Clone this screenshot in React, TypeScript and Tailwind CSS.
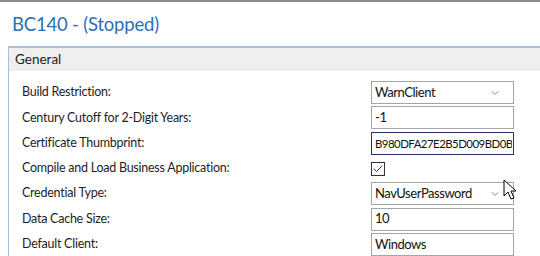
import { Check, ChevronDown } from "lucide-react";

type Field = {
  label: string;
  value?: string;
  kind: "select" | "text" | "check";
  focused?: boolean;
};

const fields: Field[] = [
  { label: "Build Restriction:", value: "WarnClient", kind: "select" },
  { label: "Century Cutoff for 2-Digit Years:", value: "-1", kind: "text" },
  { label: "Certificate Thumbprint:", value: "B980DFA27E2B5D009BD0B", kind: "text", focused: true },
  { label: "Compile and Load Business Application:", kind: "check" },
  { label: "Credential Type:", value: "NavUserPassword", kind: "select" },
  { label: "Data Cache Size:", value: "10", kind: "text" },
  { label: "Default Client:", value: "Windows", kind: "text" },
];

function Cursor() {
  return (
    <svg width="14" height="22" viewBox="0 0 14 22" className="absolute left-[503px] top-[177px]">
      <path
        d="M1 1 L1 17 L5 13 L8 20 L11 19 L8 12 L13 12 Z"
        fill="#fff"
        stroke="#000"
        strokeWidth="1"
        strokeLinejoin="round"
      />
    </svg>
  );
}

function FieldRow({ f }: { f: Field }) {
  return (
    <div className="flex items-center h-[25.3px]">
      <div className="w-[349px] text-[12.5px] tracking-[-0.25px] text-[#1e1e1e]">{f.label}</div>
      {f.kind === "check" ? (
        <div className="w-[14px] h-[14px] border border-[#333] flex items-center justify-center">
          <Check size={12} strokeWidth={1.8} className="text-[#222]" />
        </div>
      ) : (
        <div
          className={`w-[143px] h-[23px] border flex items-center pl-[3px] text-[#111] ${
            f.kind === "select" ? "pr-[12px]" : "pr-[1px]"
          } ${
            f.focused
              ? "border-[#2d2f6e] text-[11.4px] tracking-[-0.5px]"
              : "border-[#a5a5a5] text-[13px] tracking-[-0.45px]"
          }`}
        >
          <span className="flex-1 whitespace-nowrap overflow-hidden">{f.value}</span>
          {f.kind === "select" && <ChevronDown size={12} strokeWidth={1.4} className="text-[#555]" />}
        </div>
      )}
    </div>
  );
}

export default function App() {
  return (
    <div
      className="relative w-[540px] h-[256px] overflow-hidden bg-white border-t-2 border-[#8a8a8a]"
      style={{ fontFamily: 'Lato, "Noto Sans", sans-serif' }}
    >
      {/* Title */}
      <div className="pl-[12px] pt-[9px] h-[44px] text-[18.5px] tracking-[-0.2px] text-[#2b6fb5]">
        BC140 - (Stopped)
      </div>

      {/* General section */}
      <div className="ml-[8px] border-l border-t-2 border-[#a8c0de]">
        <div className="h-[23px] bg-[#efefef] pl-[6px] flex items-center text-[13.5px] text-[#222]">General</div>
        <div className="pl-[13px] pt-[9px]">
          {fields.map((f) => (
            <FieldRow key={f.label} f={f} />
          ))}
        </div>
      </div>

      <Cursor />
    </div>
  );
}
